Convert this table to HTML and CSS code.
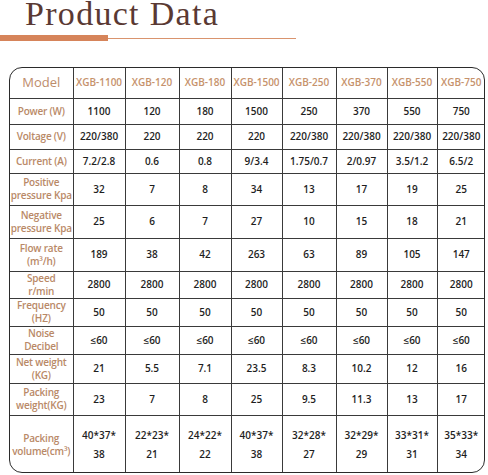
FILE: index.html
```html
<!DOCTYPE html>
<html lang="en">
<head>
    <meta charset="UTF-8">
    <title>Product Data</title>
    <link rel="stylesheet" href="styles.css">
</head>
<body>
    <div class="header">
        <h1>Product Data</h1>
        <div class="rule"><span class="rule-bar"></span><span class="rule-line"></span></div>
    </div>

    <div class="table-wrap">
        <table class="spec">
            <colgroup>
                <col style="width:63px"><col style="width:52px"><col style="width:54px">
                <col style="width:52px"><col style="width:51px"><col style="width:54px">
                <col style="width:51px"><col style="width:50px"><col style="width:48px">
            </colgroup>
            <tr class="r-head">
                <th class="model">Model</th>
                <th>XGB-1100</th><th>XGB-120</th><th>XGB-180</th><th>XGB-1500</th>
                <th>XGB-250</th><th>XGB-370</th><th>XGB-550</th><th>XGB-750</th>
            </tr>
            <tr class="r26">
                <th>Power (W)</th>
                <td>1100</td><td>120</td><td>180</td><td>1500</td><td>250</td><td>370</td><td>550</td><td>750</td>
            </tr>
            <tr class="r25">
                <th>Voltage (V)</th>
                <td>220/380</td><td>220</td><td>220</td><td>220</td><td>220/380</td><td>220/380</td><td>220/380</td><td>220/380</td>
            </tr>
            <tr class="r24">
                <th>Current (A)</th>
                <td>7.2/2.8</td><td>0.6</td><td>0.8</td><td>9/3.4</td><td>1.75/0.7</td><td>2/0.97</td><td>3.5/1.2</td><td>6.5/2</td>
            </tr>
            <tr class="r32">
                <th>Positive<br>pressure Kpa</th>
                <td>32</td><td>7</td><td>8</td><td>34</td><td>13</td><td>17</td><td>19</td><td>25</td>
            </tr>
            <tr class="r33">
                <th>Negative<br>pressure Kpa</th>
                <td>25</td><td>6</td><td>7</td><td>27</td><td>10</td><td>15</td><td>18</td><td>21</td>
            </tr>
            <tr class="r33">
                <th>Flow rate<br>(m³/h)</th>
                <td>189</td><td>38</td><td>42</td><td>263</td><td>63</td><td>89</td><td>105</td><td>147</td>
            </tr>
            <tr class="r27">
                <th>Speed<br>r/min</th>
                <td>2800</td><td>2800</td><td>2800</td><td>2800</td><td>2800</td><td>2800</td><td>2800</td><td>2800</td>
            </tr>
            <tr class="r28">
                <th>Frequency<br>(HZ)</th>
                <td>50</td><td>50</td><td>50</td><td>50</td><td>50</td><td>50</td><td>50</td><td>50</td>
            </tr>
            <tr class="r28">
                <th>Noise<br>Decibel</th>
                <td>≤60</td><td>≤60</td><td>≤60</td><td>≤60</td><td>≤60</td><td>≤60</td><td>≤60</td><td>≤60</td>
            </tr>
            <tr class="r29">
                <th>Net weight<br>(KG)</th>
                <td>21</td><td>5.5</td><td>7.1</td><td>23.5</td><td>8.3</td><td>10.2</td><td>12</td><td>16</td>
            </tr>
            <tr class="r32">
                <th>Packing<br>weight(KG)</th>
                <td>23</td><td>7</td><td>8</td><td>25</td><td>9.5</td><td>11.3</td><td>13</td><td>17</td>
            </tr>
            <tr class="r59 volume">
                <th>Packing<br>volume(cm³)</th>
                <td>40*37*<br>38</td><td>22*23*<br>21</td><td>24*22*<br>22</td><td>40*37*<br>38</td>
                <td>32*28*<br>27</td><td>32*29*<br>29</td><td>33*31*<br>31</td><td>35*33*<br>34</td>
            </tr>
        </table>
    </div>
</body>
</html>
```

FILE: styles.css
```css
body {
    margin: 0;
    background: #ffffff;
    font-family: 'Open Sans', 'Noto Sans', sans-serif;
}

.header {
    height: 67px;
}

.header h1 {
    margin: 0;
    padding-left: 25px;
    font-family: 'Liberation Serif', 'DejaVu Serif', serif;
    font-weight: normal;
    font-size: 34px;
    letter-spacing: 1.3px;
    line-height: 27px;
    color: #5a3933;
    white-space: nowrap;
}

.rule {
    display: flex;
    align-items: center;
    margin-top: 8px;
    width: 296px;
}

.rule-bar {
    width: 108px;
    height: 6px;
    background: #d6845a;
}

.rule-line {
    flex: 1;
    height: 1px;
    background: #d9946e;
}

.table-wrap {
    margin-left: 9px;
    width: 476px;
    height: 406px;
    box-sizing: border-box;
    border: 1.5px solid #2b2b2b;
    border-radius: 13px;
    overflow: hidden;
}

.spec {
    width: 100%;
    height: 100%;
    table-layout: fixed;
    border-collapse: collapse;
}

.spec th,
.spec td {
    border: 1px solid #3a3a3a;
    padding: 0;
    text-align: center;
    vertical-align: middle;
    font-size: 10px;
    line-height: 13px;
    white-space: nowrap;
}

.spec tr:first-child th { border-top: none; }
.spec tr:last-child th,
.spec tr:last-child td { border-bottom: none; }
.spec th:first-child { border-left: none; }
.spec td:last-child,
.spec th:last-child { border-right: none; }

.spec th {
    font-weight: 600;
    color: #b98967;
    letter-spacing: -0.2px;
}

.spec td {
    color: #1e1e1e;
    font-weight: 600;
}

.r-head th {
    color: #c6926c;
    letter-spacing: 0;
}

.r-head .model {
    font-size: 13px;
    font-weight: 500;
    color: #bd8c6a;
}

.r-head { height: 30px; }
.r24 { height: 24px; }
.r25 { height: 25px; }
.r26 { height: 26px; }
.r27 { height: 27px; }
.r28 { height: 28px; }
.r29 { height: 29px; }
.r32 { height: 32px; }
.r33 { height: 33px; }
.r59 { height: 59px; }

.volume td {
    line-height: 19px;
}
```
